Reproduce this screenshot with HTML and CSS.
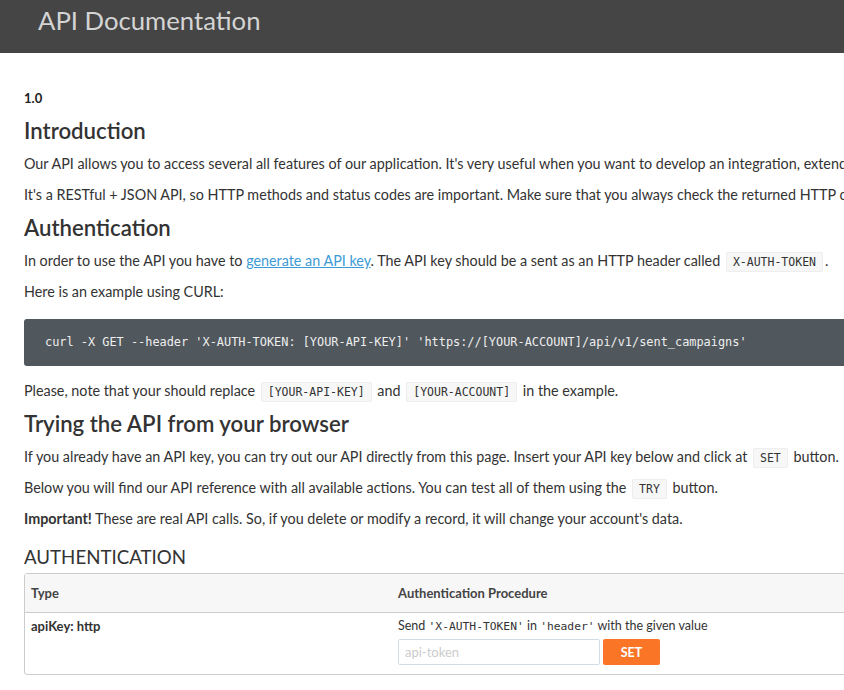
FILE: index.html
```html
<!DOCTYPE html>
<html lang="en">
<head>
<meta charset="utf-8">
<title>API Documentation</title>
<link rel="stylesheet" href="styles.css">
</head>
<body>
<header class="topbar">
  <h1 class="topbar-title">API Documentation</h1>
</header>
<main class="content">
  <div class="version">1.0</div>
  <h2 class="h2">Introduction</h2>
  <p>Our API allows you to access several all features of our application. It's very useful when you want to develop an integration, extend our platform or automate processes.</p>
  <p>It's a RESTful + JSON API, so HTTP methods and status codes are important. Make sure that you always check the returned HTTP codes and messages.</p>
  <h2 class="h2">Authentication</h2>
  <p>In order to use the API you have to <a href="#" class="link">generate an API key</a>. The API key should be a sent as an HTTP header called <code class="ic">X-AUTH-TOKEN</code>.</p>
  <p>Here is an example using CURL:</p>
  <pre class="codeblock">curl -X GET --header 'X-AUTH-TOKEN: [YOUR-API-KEY]' 'https://[YOUR-ACCOUNT]/api/v1/sent_campaigns'</pre>
  <p>Please, note that your should replace <code class="ic">[YOUR-API-KEY]</code> and <code class="ic">[YOUR-ACCOUNT]</code> in the example.</p>
  <h2 class="h2">Trying the API from your browser</h2>
  <p>If you already have an API key, you can try out our API directly from this page. Insert your API key below and click at <code class="ic">SET</code> button.</p>
  <p>Below you will find our API reference with all available actions. You can test all of them using the <code class="ic">TRY</code> button.</p>
  <p><strong>Important!</strong> These are real API calls. So, if you delete or modify a record, it will change your account's data.</p>
  <h3 class="h3">Authentication</h3>
  <div class="table">
    <div class="row head">
      <div class="cell c1">Type</div>
      <div class="cell c2">Authentication Procedure</div>
    </div>
    <div class="row">
      <div class="cell c1 strong">apiKey: http</div>
      <div class="cell c2">
        <div class="send">Send <span class="mono">'X-AUTH-TOKEN'</span> in <span class="mono">'header'</span> with the given value</div>
        <div class="form">
          <input class="token" type="text" placeholder="api-token">
          <button class="set">SET</button>
        </div>
      </div>
    </div>
  </div>
</main>
</body>
</html>
```

FILE: styles.css
```css
html, body {
  margin: 0;
  padding: 0;
  overflow: hidden;
  background: #fff;
}
body {
  font-family: Lato, "Liberation Sans", sans-serif;
  color: #333;
  font-size: 14.35px;
  width: 1300px;
}
.topbar {
  background: #454545;
  height: 53px;
  display: flex;
  align-items: center;
  padding-left: 38px;
}
.topbar-title {
  margin: 0 0 13px;
  font-size: 25.7px;
  font-weight: 400;
  color: #d4d4d4;
  line-height: 30px;
}
.content {
  padding: 36px 24px 0;
}
.version {
  font-size: 13px;
  font-weight: 700;
  line-height: 18px;
  margin-bottom: 12px;
  color: #222;
}
.h2 {
  font-size: 22.2px;
  font-weight: 600;
  line-height: 24px;
  margin: 0 0 11px;
  color: #333;
}
p {
  margin: 0 0 11px;
  line-height: 20px;
}
.link {
  color: #3d9bd6;
}
.ic {
  font-family: "DejaVu Sans Mono", monospace;
  font-size: 11.5px;
  line-height: 1;
  background: #f7f7f7;
  border: 1px solid #eee;
  border-radius: 2px;
  padding: 2px 6px;
  margin: 0 2px;
  color: #333;
}
.codeblock {
  margin: 17px 0 15px;
  background: #50575d;
  color: #eee;
  font-family: "DejaVu Sans Mono", monospace;
  font-size: 11.9px;
  line-height: 16px;
  padding: 15px 21px 16px;
  border-radius: 3px;
}
.h3 {
  font-size: 18.7px;
  font-weight: 400;
  text-transform: uppercase;
  line-height: 22px;
  margin: 17px 0 5px;
  color: #333;
}
.table {
  border: 1px solid #ccc;
  border-radius: 3px;
  font-size: 13px;
}
.row {
  display: flex;
}
.row.head {
  background: #f7f7f7;
  border-bottom: 1px solid #ccc;
  font-weight: 700;
  color: #444;
  height: 38px;
  align-items: center;
}
.cell {
  padding: 0 6px;
}
.c1 {
  width: 355px;
}
.row:not(.head) .cell {
  padding-top: 5px;
  padding-bottom: 9px;
}
.strong {
  font-weight: 700;
}
.c2 .send {
  font-size: 12.5px;
  line-height: 15px;
}
.mono {
  font-family: "DejaVu Sans Mono", monospace;
  font-size: 11.3px;
}
.form {
  display: flex;
  gap: 3px;
  margin-top: 5px;
}
.token {
  width: 202px;
  height: 26px;
  box-sizing: border-box;
  border: 1px solid #cfdde8;
  border-radius: 2px;
  padding: 0 6px;
  font-family: Lato, "Liberation Sans", sans-serif;
  font-size: 13px;
  color: #333;
}
.token::placeholder {
  color: #ccc;
}
.set {
  width: 57px;
  height: 26px;
  border: 0;
  border-radius: 2px;
  background: #fa7626;
  color: #fff;
  font-family: Lato, "Liberation Sans", sans-serif;
  font-weight: 700;
  font-size: 12.5px;
}
```
